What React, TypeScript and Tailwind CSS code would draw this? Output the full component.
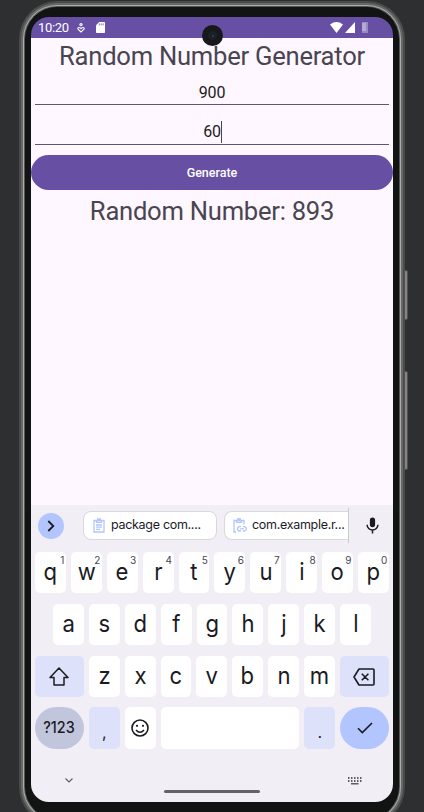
import type { ReactNode } from "react";

const topRow = ["q", "w", "e", "r", "t", "y", "u", "i", "o", "p"];
const homeRow = ["a", "s", "d", "f", "g", "h", "j", "k", "l"];
const bottomRow = ["z", "x", "c", "v", "b", "n", "m"];

function Key({ children, hint }: { children: ReactNode; hint?: string }) {
  return (
    <div className="relative flex h-[41px] w-[30.9px] shrink-0 items-center justify-center rounded-[5px] bg-white text-[24px] leading-none text-[#1b1b1f]">
      <span className="-mt-[2px] scale-x-[.92]">{children}</span>
      {hint && <span className="absolute top-[3px] right-[1.5px] text-[10px] leading-[10px] text-[#45464f]">{hint}</span>}
    </div>
  );
}

function StatusBar() {
  return (
    <div className="flex h-[21px] shrink-0 items-center bg-[#6750a4] pl-[7px] text-white">
      <span className="w-[31px] text-[13px] leading-none tracking-[-0.3px] whitespace-nowrap">10:20</span>
      <svg className="ml-[8px]" width="8" height="10" viewBox="0 0 8 10" fill="none" stroke="currentColor" strokeWidth="1.1">
        <circle cx="4" cy="1.7" r="1.1" />
        <path d="M4 9 1 6.1C.2 4.8 2 3.7 4 5.6 6 3.7 7.8 4.8 7 6.1Z" />
      </svg>
      <svg className="ml-[11px]" width="9" height="11" viewBox="0 0 9 11">
        <path d="M3.2 0H8.2Q9 0 9 .8V10.2Q9 11 8.2 11H.8Q0 11 0 10.2V3.2Z" fill="currentColor" />
        <path d="M3.3 1.4v2M5.2 1.4v2M7.1 1.4v2" stroke="#6750a4" strokeWidth=".8" />
      </svg>
      <svg className="ml-[225px]" width="13" height="11" viewBox="0 0 13 11" fill="currentColor">
        <path d="M0 2.4Q6.5-2.4 13 2.4L6.5 11Z" />
      </svg>
      <svg className="ml-[2px]" width="10" height="11" viewBox="0 0 10 11" fill="currentColor">
        <path d="M10 0V11H0Z" />
      </svg>
      <svg className="ml-[7px]" width="6" height="11" viewBox="0 0 6 11">
        <path d="M0 0H6V11H0Z" fill="#9888c3" />
        <path d="M0 1H4V9H0Z" fill="#b6a9d3" />
      </svg>
    </div>
  );
}

function AppContent() {
  return (
    <div className="flex h-[467px] shrink-0 flex-col items-center bg-[#fef7ff] text-[#49454f]">
      <h1 className="h-[37px] text-[25.6px] leading-[37px] tracking-[-0.25px] whitespace-nowrap">Random Number Generator</h1>
      <div className="h-[30px] w-[354px] border-b border-[#5e5967] text-center text-[16px] leading-[35px] tracking-[-0.2px] text-[#1d1b20]">900</div>
      <div className="flex h-[40px] w-[354px] items-center justify-center border-b border-[#5e5573] pt-[14px] pl-px text-[16px] tracking-[-0.2px] text-[#1d1b20]">
        <span className="pt-px">60</span>
        <span className="h-[22px] w-px bg-[#49454f]" />
      </div>
      <button className="mt-[10px] h-[35px] w-full shrink-0 rounded-full bg-[#6750a4] pt-[2px] text-[12.5px] font-medium text-white">Generate</button>
      <p className="mt-[3px] text-[25.6px] leading-[36px] tracking-[-0.25px] whitespace-nowrap">Random Number: 893</p>
    </div>
  );
}

function Suggestions() {
  return (
    <div className="flex h-[47px] items-center pl-[7px] text-[#1b1b1f]">
      <div className="-mt-[6px] flex size-[26px] shrink-0 items-center justify-center rounded-full bg-[#b3c5ff]">
        <svg width="8" height="12" viewBox="0 0 8 12" fill="none" stroke="currentColor" strokeWidth="1.8">
          <path d="m1.3 1 5 5-5 5" />
        </svg>
      </div>
      <div className="-mt-[6px] ml-[19px] flex h-[29px] w-[134px] shrink-0 items-center rounded-[8px] border border-[#d9d8dd] bg-white pl-[9px] whitespace-nowrap">
        <svg className="shrink-0" width="12" height="15" viewBox="0 0 12 15" fill="none" stroke="#b3c5ff" strokeWidth="1.3">
          <path d="M1 2.5H11V14H1ZM3.5 2.5V4.4H8.5V2.5M4.7 2.5V1H7.3V2.5M3 7H9M3 9.2H9M3 11.4H7" />
        </svg>
        <span className="ml-[6px] text-[12.5px] tracking-[-0.3px]">package com....</span>
      </div>
      <div className="-mt-[6px] ml-[7px] flex h-[35px] w-[125px] shrink-0 items-center border-r border-[#cbcacf] whitespace-nowrap">
        <div className="flex h-[29px] w-full items-center rounded-l-[8px] border border-r-0 border-[#d9d8dd] bg-white pl-[8px]">
          <svg className="shrink-0" width="14" height="15" viewBox="0 0 14 15" fill="none" stroke="#b3c5ff" strokeWidth="1.3">
            <path d="M3 14H1V2.5H11V6.5M3.5 2.5V4.4H8.5V2.5M4.7 2.5V1H7.3V2.5M8 8.7H6.8C3.8 8.7 3.8 13 6.8 13H8M10 8.7H11.2C14.1 8.7 14.1 13 11.2 13H10M7 10.8H11" />
          </svg>
          <span className="ml-[5px] text-[12.5px] tracking-[-0.3px]">com.example.r...</span>
        </div>
      </div>
      <svg className="-mt-[6px] ml-[17px] shrink-0" width="13" height="17" viewBox="0 0 14 17" fill="none" stroke="currentColor">
        <path d="M4.2 2.8a2.8 2.8 0 0 1 5.6 0V7.5a2.8 2.8 0 0 1-5.6 0Z" fill="currentColor" stroke="none" />
        <path d="M1.2 7.6a5.8 5.8 0 0 0 11.6 0M7 13.3V17" strokeWidth="1.6" />
      </svg>
    </div>
  );
}

function Keyboard() {
  return (
    <div className="flex h-[297px] shrink-0 flex-col bg-[#f1eff5] font-['Inter',sans-serif] text-[#1b1b1f]">
      <Suggestions />
      <div className="flex flex-col gap-[11px] px-1">
        <div className="flex gap-[5px]">
          {topRow.map((k, i) => <Key key={k} hint={String((i + 1) % 10)}>{k}</Key>)}
        </div>
        <div className="flex justify-center gap-[5px]">
          {homeRow.map((k) => <Key key={k}>{k}</Key>)}
        </div>
        <div className="flex gap-[5px]">
          <div className="flex w-[48.8px] shrink-0 items-center justify-center rounded-[5px] bg-[#dde1f9]">
            <svg width="20" height="19" viewBox="0 0 20 19" fill="none" stroke="currentColor" strokeWidth="1.5" strokeLinejoin="round">
              <path d="M10 1 19 10.5H15V18H5V10.5H1Z" />
            </svg>
          </div>
          {bottomRow.map((k) => <Key key={k}>{k}</Key>)}
          <div className="flex w-[48.8px] shrink-0 items-center justify-center rounded-[5px] bg-[#dde1f9]">
            <svg width="22" height="18" viewBox="0 0 22 18" fill="none" stroke="currentColor" strokeWidth="1.6" strokeLinejoin="round">
              <path d="M6 1H20Q21 1 21 2V16Q21 17 20 17H6L1 9ZM8.8 5.7 15.4 12.3M15.4 5.7 8.8 12.3" />
            </svg>
          </div>
        </div>
        <div className="-mt-px flex h-[42px] gap-[5px]">
          <div className="flex w-[48.8px] items-center justify-center rounded-full bg-[#c1c6dd] text-[15.5px] font-medium">
            <span className="scale-x-[.93]">?123</span>
          </div>
          <div className="flex w-[30.9px] items-center justify-center rounded-[5px] bg-[#dde1f9] pt-[8px] text-[16px]">,</div>
          <div className="flex w-[30.9px] items-center justify-center rounded-[5px] bg-white">
            <svg width="18" height="18" viewBox="0 0 18 18" fill="none" stroke="currentColor" strokeWidth="1.6">
              <circle cx="9" cy="9" r="8" />
              <circle cx="6" cy="6.8" r="1.1" fill="currentColor" stroke="none" />
              <circle cx="12" cy="6.8" r="1.1" fill="currentColor" stroke="none" />
              <path d="M5 11Q9 15.5 13 11" />
            </svg>
          </div>
          <div className="flex-1 rounded-[5px] bg-white" />
          <div className="flex w-[30.9px] items-center justify-center rounded-[5px] bg-[#dde1f9] pt-[8px] text-[16px]">.</div>
          <div className="flex w-[48.8px] items-center justify-center rounded-full bg-[#b3c5ff]">
            <svg width="16" height="12" viewBox="0 0 16 12" fill="none" stroke="currentColor" strokeWidth="1.6">
              <path d="m1 6.3 4.3 4.3L15 1" />
            </svg>
          </div>
        </div>
      </div>
      <div className="flex h-[53px] items-start pl-[34px] text-[#5e5e62]">
        <svg className="mt-[29px]" width="8" height="5" viewBox="0 0 8 5" fill="none" stroke="currentColor" strokeWidth="1.1">
          <path d="m.5.5 3.5 3.5L7.5.5" />
        </svg>
        <div className="mt-[41px] ml-[91px] h-[3px] w-[96px] rounded-full bg-[#626267]" />
        <svg className="mt-[28px] ml-[88px]" width="14" height="8" viewBox="0 0 14 8" fill="currentColor">
          <path d="M0 0h1.5v2H0zM3 0h1.5v2H3zM6 0h1.5v2H6zM9 0h1.5v2H9zM12 0h1.5v2H12zM0 3h1.5v2H0zM3 3h1.5v2H3zM6 3h1.5v2H6zM9 3h1.5v2H9zM12 3h1.5v2H12zM3 6h7.5v1.5H3z" />
        </svg>
      </div>
    </div>
  );
}

export default function App() {
  return (
    <div className="relative h-[812px] w-[424px] overflow-hidden bg-[#2e2f31] pt-px pl-[19px] font-['Roboto',sans-serif]">
      <div className="absolute top-[270px] left-[404px] h-[50px] w-[4px] rounded-r-[2px] border border-[#515152] bg-[#858585]" />
      <div className="absolute top-[371px] left-[404px] h-[99px] w-[4px] rounded-r-[2px] border border-[#515152] bg-[#858585]" />
      <div className="h-[824px] w-[386px] rounded-[38px] bg-[#4a4a4a] p-[2px]">
        <div className="h-full rounded-[36px] bg-[#686868] p-[2px]">
          <div className="h-full rounded-[34px] bg-[#acacac] p-px">
            <div className="h-full rounded-[33px] bg-[#555555] p-px">
              <div className="h-full rounded-[32px] bg-[#121313] px-[6px] pt-[10px]">
                <div className="flex h-[785px] w-[362px] flex-col overflow-hidden rounded-[18px]">
                  <StatusBar />
                  <AppContent />
                  <Keyboard />
                </div>
              </div>
            </div>
          </div>
        </div>
      </div>
      <div className="absolute top-[25px] left-[202px] flex size-[21px] items-center justify-center rounded-full bg-[#171819]">
        <div className="flex size-[9px] items-center justify-center rounded-full bg-[#1d2125]">
          <div className="size-[2px] rounded-full bg-[#24447d]" />
        </div>
      </div>
    </div>
  );
}
